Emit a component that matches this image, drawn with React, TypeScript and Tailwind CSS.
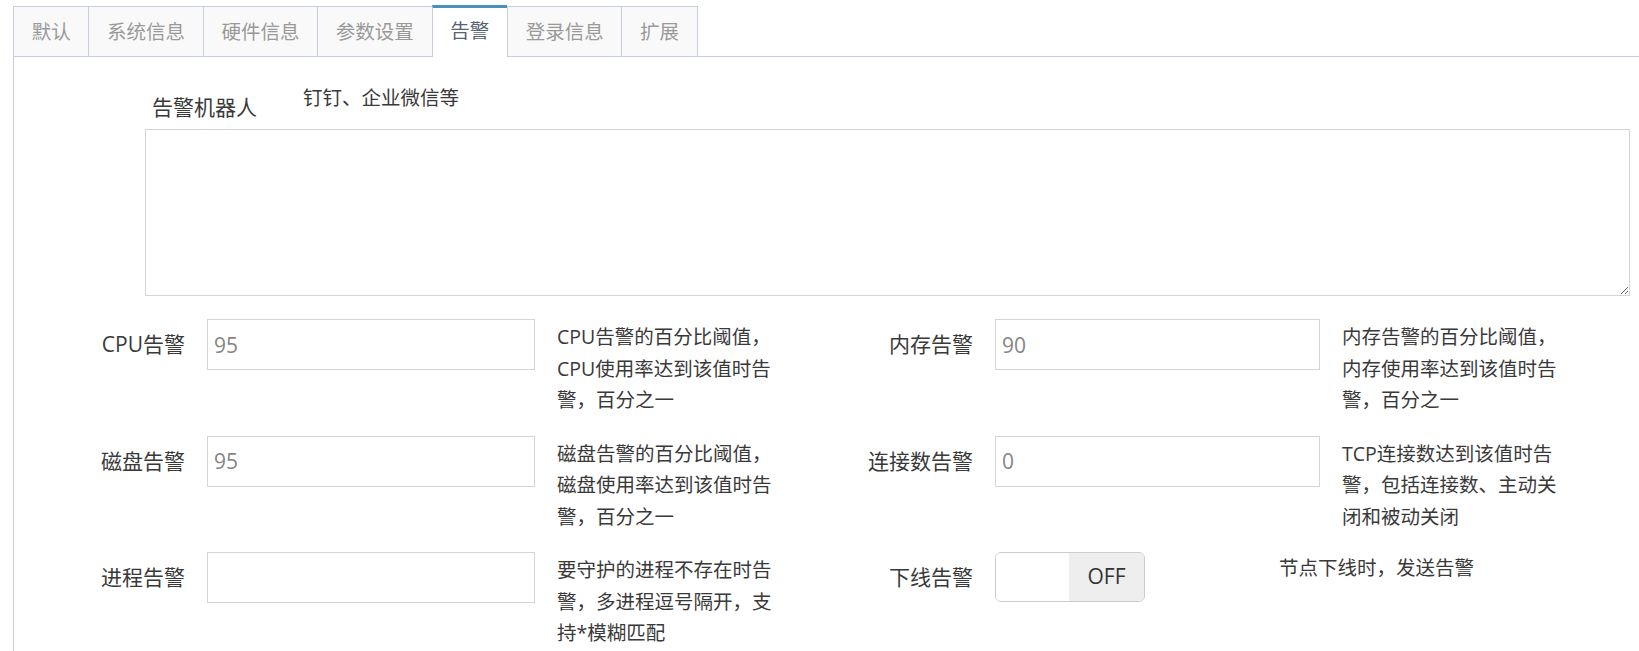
import React from "react";

const tabs = ["默认", "系统信息", "硬件信息", "参数设置", "告警", "登录信息", "扩展"];

type Field = {
    label: string;
    value?: string;
    hint: string[];
    inputWidth: string;
    isSwitch?: boolean;
};

const rows: Field[][] = [
    [
        {
            label: "CPU告警",
            value: "95",
            hint: ["CPU告警的百分比阈值，", "CPU使用率达到该值时告", "警，百分之一"],
            inputWidth: "w-[328px]",
        },
        {
            label: "内存告警",
            value: "90",
            hint: ["内存告警的百分比阈值，", "内存使用率达到该值时告", "警，百分之一"],
            inputWidth: "w-[325px]",
        },
    ],
    [
        {
            label: "磁盘告警",
            value: "95",
            hint: ["磁盘告警的百分比阈值，", "磁盘使用率达到该值时告", "警，百分之一"],
            inputWidth: "w-[328px]",
        },
        {
            label: "连接数告警",
            value: "0",
            hint: ["TCP连接数达到该值时告", "警，包括连接数、主动关", "闭和被动关闭"],
            inputWidth: "w-[325px]",
        },
    ],
    [
        {
            label: "进程告警",
            value: "",
            hint: ["要守护的进程不存在时告", "警，多进程逗号隔开，支", "持*模糊匹配"],
            inputWidth: "w-[328px]",
        },
        {
            label: "下线告警",
            hint: ["节点下线时，发送告警"],
            inputWidth: "w-[150px]",
            isSwitch: true,
        },
    ],
];

function FormCell({ field }: { field: Field }) {
    return (
        <div className="flex items-start">
            <label className="w-[171px] shrink-0 text-right text-[21px] leading-[51px] text-[#393939]">
                {field.label}
            </label>

            {field.isSwitch ? (
                <>
                    <div className="ml-[22px] flex h-[50px] w-[150px] shrink-0 overflow-hidden rounded-[6px] border border-[#cccccc]">
                        <span className="w-[73px] bg-white" />
                        <span className="flex flex-1 items-center justify-center bg-[#eeeeee] text-[21px] text-[#333333]">
                            OFF
                        </span>
                    </div>
                    <div className="ml-[134px] whitespace-nowrap text-[19.5px] leading-[31.5px] text-[#393939]">
                        {field.hint.map((line) => (
                            <div key={line}>{line}</div>
                        ))}
                    </div>
                </>
            ) : (
                <>
                    <input
                        type="text"
                        defaultValue={field.value}
                        className={`ml-[22px] h-[51px] shrink-0 border border-[#d5d5d5] bg-white px-[6px] text-[21px] text-[#858585] outline-none ${field.inputWidth}`}
                    />
                    <div className="ml-[22px] whitespace-nowrap pt-[2px] text-[19.5px] leading-[31.5px] text-[#393939]">
                        {field.hint.map((line) => (
                            <div key={line}>{line}</div>
                        ))}
                    </div>
                </>
            )}
        </div>
    );
}

export default function App() {
    return (
        <div className="h-[651px] w-[1639px] overflow-hidden bg-white font-['Open_Sans','Noto_Sans_CJK_SC',sans-serif]">
            <div className="pl-[13px] pt-[6px]">
                {/* tabs */}
                <ul className="flex h-[50px] items-start">
                    {tabs.map((tab, i) => {
                        const active = tab === "告警";
                        const last = i === tabs.length - 1;
                        return (
                            <li
                                key={tab}
                                className={
                                    active
                                        ? "relative z-10 -mt-px h-[52px] border-l border-t-[3px] border-l-[#c5d0dc] border-t-[#4c8fbd] bg-white px-[17.7px] pt-[9px] text-[19.5px] leading-[27px] text-[#576373]"
                                        : last
                                          ? "h-[50px] border-x border-t border-[#c5d0dc] bg-[#f9f9f9] px-[17.7px] pt-[11px] text-[19.5px] leading-[27px] text-[#999999]"
                                          : "h-[50px] border-l border-t border-[#c5d0dc] bg-[#f9f9f9] px-[17.7px] pt-[11px] text-[19.5px] leading-[27px] text-[#999999]"
                                }
                            >
                                {tab}
                            </li>
                        );
                    })}
                </ul>

                {/* panel */}
                <div className="border-l border-t border-[#c5d0dc] pb-10 pt-[25px]">
                    <div className="flex items-start">
                        <label className="ml-[138px] mt-[10px] text-[21px] leading-[31.5px] text-[#393939]">
                            告警机器人
                        </label>
                        <span className="ml-[46px] text-[19.5px] leading-[31.5px] text-[#393939]">
                            钉钉、企业微信等
                        </span>
                    </div>

                    <textarea className="ml-[131px] mt-[5.5px] block h-[167px] w-[1485px] border border-[#d5d5d5] bg-white outline-none" />

                    <div className="mt-[23px]">
                        {rows.map((row, r) => (
                            <div key={r} className="mb-[20px] grid grid-cols-[788px_1fr]">
                                {row.map((field) => (
                                    <FormCell key={field.label} field={field} />
                                ))}
                            </div>
                        ))}
                    </div>
                </div>
            </div>
        </div>
    );
}
